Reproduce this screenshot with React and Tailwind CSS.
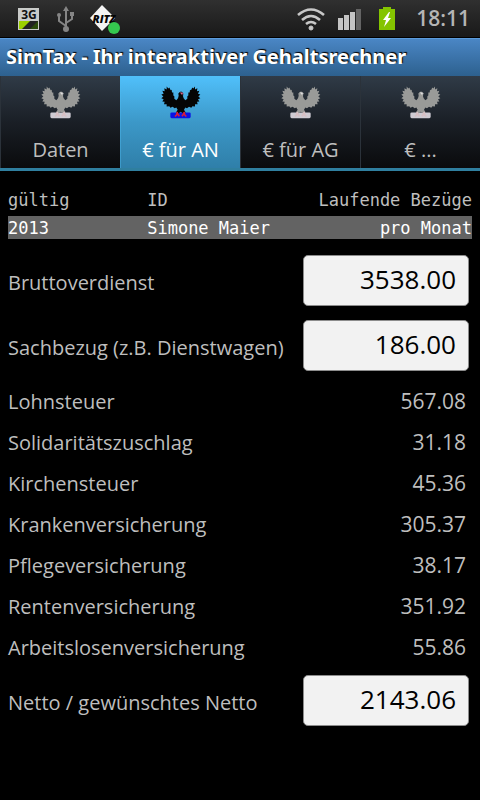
import React, { useState } from "react";
import clsx from "clsx";

const tabs = ["Daten", "€ für AN", "€ für AG", "€ ..."];

const deductions = [
  { label: "Lohnsteuer", value: "567.08" },
  { label: "Solidaritätszuschlag", value: "31.18" },
  { label: "Kirchensteuer", value: "45.36" },
  { label: "Krankenversicherung", value: "305.37" },
  { label: "Pflegeversicherung", value: "38.17" },
  { label: "Rentenversicherung", value: "351.92" },
  { label: "Arbeitslosenversicherung", value: "55.86" },
];

const App = () => {
  const [active, setActive] = useState(1);
  const [amounts, setAmounts] = useState({
    brutto: "3538.00",
    sachbezug: "186.00",
    netto: "2143.06",
  });

  const setAmount = (key) => (e) =>
    setAmounts({ ...amounts, [key]: e.target.value });

  return (
    <div className="min-h-screen bg-black font-['Open_Sans','Noto_Sans',sans-serif] text-[#bebebe]">
      <StatusBar />

      {/* Title */}
      <header className="h-[38px] overflow-hidden border-t border-[#5b9bdc] bg-linear-to-b from-[#4a86c5] to-[#2d618f] px-1.5">
        <h1 className="font-['Noto_Sans',sans-serif] text-xl leading-9 font-bold whitespace-nowrap text-white [text-shadow:1px_-1px_1px_#000]">
          SimTax - Ihr interaktiver Gehaltsrechner
        </h1>
      </header>

      {/* Tabs */}
      <nav className="grid grid-cols-4 border-b-3 border-[#2f7f9f] bg-linear-to-b from-[#303b47] via-[#1a1f26] to-[#0a0b0d]">
        {tabs.map((label, i) => (
          <TabButton
            key={label}
            label={label}
            active={active === i}
            onClick={() => setActive(i)}
          />
        ))}
      </nav>

      <main className="px-2 pt-4">
        <table className="w-full table-fixed font-['DejaVu_Sans_Mono',monospace] text-[17px] leading-[22px]">
          <thead>
            <tr className="text-left">
              <th className="w-[30%] pt-0.5 pb-[5px] font-normal">gültig</th>
              <th className="w-[30%] pt-0.5 pb-[5px] font-normal">ID</th>
              <th className="pt-0.5 pb-[5px] text-right font-normal">Laufende Bezüge</th>
            </tr>
          </thead>
          <tbody>
            <tr className="bg-[#636363] whitespace-nowrap text-white">
              <td className="pt-px">2013</td>
              <td className="pt-px">Simone Maier</td>
              <td className="pt-px text-right">pro Monat</td>
            </tr>
          </tbody>
        </table>

        {/* Amounts */}
        <form className="pt-4">
          <AmountRow
            id="brutto"
            label="Bruttoverdienst"
            value={amounts.brutto}
            onChange={setAmount("brutto")}
          />
          <AmountRow
            id="sachbezug"
            label="Sachbezug (z.B. Dienstwagen)"
            value={amounts.sachbezug}
            onChange={setAmount("sachbezug")}
          />

          <dl className="-mt-1">
            {deductions.map((d) => (
              <div
                key={d.label}
                className="flex h-[41px] items-center justify-between pr-1.5 text-xl"
              >
                <dt>{d.label}</dt>
                <dd className="text-[21px]">{d.value}</dd>
              </div>
            ))}
          </dl>

          <div className="pt-[7px]">
            <AmountRow
              id="netto"
              label="Netto / gewünschtes Netto"
              value={amounts.netto}
              onChange={setAmount("netto")}
            />
          </div>
        </form>
      </main>
    </div>
  );
};

const TabButton = ({ label, active, onClick }) => (
  <button
    type="button"
    onClick={onClick}
    className={clsx(
      "flex h-[92px] flex-col items-center justify-between border-l pt-2.5 pb-0.5 text-xl",
      active
        ? "border-[#4fbdf5]/40 bg-linear-to-b from-[#50c0fb] via-[#3c98c8] to-[#2f7fa9] text-white"
        : "border-[#2b323a] text-[#bebebe]"
    )}
  >
    <Eagle active={active} />
    <span className="leading-8">{label}</span>
  </button>
);

const AmountRow = ({ id, label, value, onChange }) => (
  <div className="flex items-center justify-between pr-[3px] pb-3.5">
    <label htmlFor={id} className="pt-1 text-xl">
      {label}
    </label>
    <input
      id={id}
      type="text"
      inputMode="decimal"
      value={value}
      onChange={onChange}
      className="h-[51px] w-[36%] rounded-[5px] border border-[#8c8c8c] bg-[#f2f2f2] pr-3 pb-1 text-right text-[26px] text-black outline-none"
    />
  </div>
);

const Eagle = ({ active }) => {
  const body = active ? "#050505" : "#999a98";
  return (
    <svg viewBox="0 0 120 98" className="h-[33px] w-10" aria-hidden="true">
      <rect x="28" y="79" width="61" height="17" rx="4" fill={active ? "#0a12e6" : "#cfcbd3"} />
      <path
        fill={body}
        d="M17 1 L22 7 L25 4 L29 12 L32 11 L33 19 L37 19 L37 28 L40 30 L40 38 L46 42 L51 36 L53 29 L52 22 L57 17 L63 17 L67 22 L66 30 L68 36 L73 42 L79 38 L79 30 L82 28 L82 19 L86 19 L87 11 L90 12 L94 4 L97 7 L102 1 L102 10 L109 6 L108 15 L115 14 L111 23 L118 25 L112 31 L118 36 L111 39 L115 46 L108 47 L110 54 L102 54 L102 61 L94 60 L91 65 L84 62 L78 66 L73 64 L69 71 L74 79 L67 82 L59 77 L52 82 L45 79 L50 71 L46 64 L41 66 L35 62 L28 65 L25 60 L17 61 L17 54 L9 54 L11 47 L4 46 L8 39 L1 36 L7 31 L1 25 L8 23 L4 14 L11 15 L10 6 L17 10 Z"
      />
      <path d="M56 19 h7 l6 2 -5 2 v5 l-4 -5 z" fill={active ? "#d66a91" : "#dededf"} />
      <path
        d="M49 77 l-2 9 -5 5 M49 81 l6 9 M69 77 l2 9 5 5 M69 81 l-6 9"
        fill="none"
        stroke={active ? "#d61c3c" : "#d8bfc3"}
        strokeWidth="5"
      />
    </svg>
  );
};

const StatusBar = () => (
  <div className="flex h-[38px] items-center justify-between border-b border-black bg-linear-to-b from-[#303030] to-[#191919] pr-2.5 pl-[17px]">
    <div className="flex items-center gap-3.5">
      {/* 3G data */}
      <svg width="24" height="24" viewBox="0 0 24 24">
        <rect x="1" y="1" width="21" height="22" fill="#c9cbc9" />
        <rect x="2" y="14" width="19" height="8" fill="#222" />
        <path d="M2 14h11l-8 8H2z" fill="#9bd000" />
        <path d="M13 22l8-8v8z" fill="#2b4a0c" />
        <text x="12" y="12" textAnchor="middle" fontSize="12" fontWeight="700" fill="#111" fontFamily="Noto Sans, sans-serif">
          3G
        </text>
      </svg>
      {/* USB */}
      <svg width="20" height="28" viewBox="0 0 20 28" fill="none" stroke="#858585" strokeWidth="2">
        <path d="M11 5v18M11 21l-7-5v-5M11 18l6-4v-4" />
        <path d="M11 1l3 5H8z" fill="#858585" stroke="none" />
        <circle cx="11" cy="24" r="3" fill="#858585" stroke="none" />
        <circle cx="4" cy="10" r="2" fill="#858585" stroke="none" />
        <rect x="15" y="7" width="4" height="4" fill="#858585" stroke="none" />
      </svg>
      {/* Fritz app */}
      <svg width="32" height="32" viewBox="0 0 32 32">
        <path d="M13 2l13 13-13 13L1 15z" fill="#f4f4f4" />
        <text x="15" y="20" textAnchor="middle" fontSize="11" fontWeight="900" fontStyle="italic" fill="#050505" fontFamily="Open Sans, sans-serif">
          RITZ
        </text>
        <circle cx="25" cy="25" r="6" fill="#35c84f" />
      </svg>
    </div>

    <div className="flex items-center">
      {/* Wifi */}
      <svg width="30" height="24" viewBox="0 0 30 24" fill="none" stroke="#c8c8c8">
        <path d="M2 8Q15-3 28 8M6 13q9-8 18 0M10 17q5-4 10 0" strokeWidth="2.6" />
        <circle cx="15" cy="21" r="2" fill="#c8c8c8" />
      </svg>
      {/* Signal */}
      <svg width="24" height="24" viewBox="0 0 24 24" className="ml-3" fill="#c4c4c4">
        <rect x="0" y="11" width="5" height="12" />
        <rect x="6" y="8" width="5" height="15" />
        <rect x="12" y="5" width="5" height="18" />
        <rect x="18" y="2" width="5" height="21" fill="#646464" />
      </svg>
      {/* Battery */}
      <svg width="18" height="26" viewBox="0 0 18 26" className="ml-4">
        <path d="M5 1h8v2h4v21H1V3h4z" fill="#84c400" />
        <path d="M11 6l-6 8h3l-2 7 7-9h-3l2-6z" fill="#fff" />
      </svg>
      <span className="ml-5 text-[21px] font-semibold text-[#b5b5b5]">18:11</span>
    </div>
  </div>
);

export default App;
